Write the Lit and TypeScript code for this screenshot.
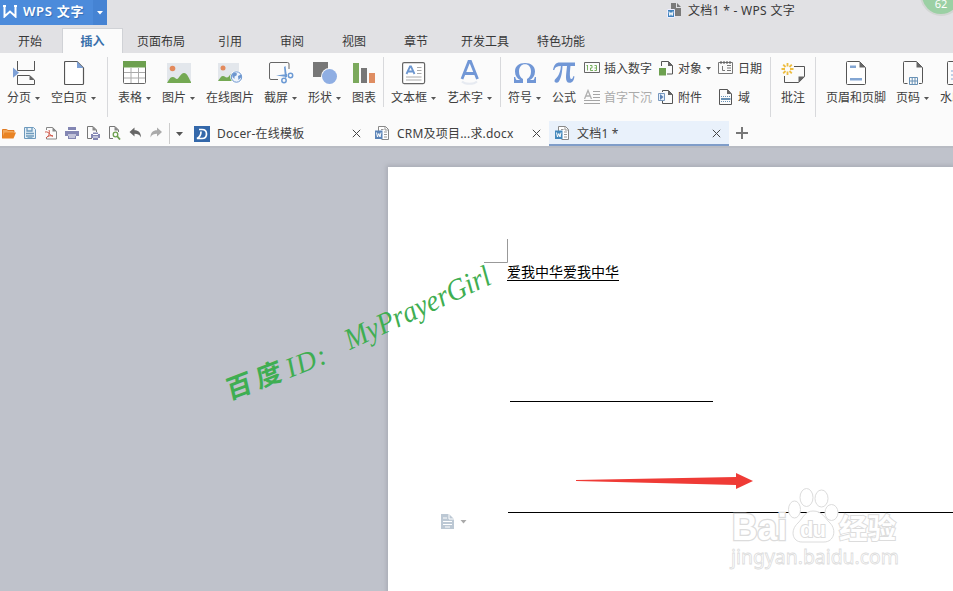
import { LitElement, html, svg, css, nothing, TemplateResult } from "lit";
import { customElement } from "lit/decorators.js";
import { classMap } from "lit/directives/class-map.js";
import { styleMap } from "lit/directives/style-map.js";

interface Tool {
  label: string;
  width: number;
  inset: number;
  icon: TemplateResult;
  caret?: boolean;
}

interface SmallTool {
  label: string;
  icon: TemplateResult;
  caret?: boolean;
  disabled?: boolean;
}

const caret = html`<svg class="caret" width="5" height="3" viewBox="0 0 5 3"><path d="M0 0h5L2.500 3z" fill="#555" /></svg>`;

const big = (body: unknown) => html`<svg class="big" width="26" height="26" viewBox="0 0 26 26" fill="none">${body}</svg>`;
const small = (body: unknown) => html`<svg class="small" width="16" height="16" viewBox="0 0 16 16" fill="none">${body}</svg>`;

const art = {
  pageBreak: big(svg`
    <path d="M4.500 1v9.500h17V1M9 15.500H4.500V24.500h17v-4.500L16.500 15.500H6" stroke="#555" />
    <path d="M16.500 15v5h5z" fill="#666" /><path d="M0 7.500l6 5.200-6 5z" fill="#7da0d6" />`),
  blank: big(svg`
    <path d="M.5 2.500a1 1 0 0 1 1-1h11.500l6.500 6.500v15.500a1 1 0 0 1-1 1h-17a1 1 0 0 1-1-1z" stroke="#555" stroke-width="1.200" fill="#fff" />
    <path d="M13 1.500V8h6.500z" fill="#7da0d6" />`),
  table: big(svg`
    <rect x=".5" y="1.500" width="22" height="22" rx="1" stroke="#666" fill="#fff" />
    <path d="M0 1h23v6.500H0z" fill="#6da04f" />
    <path d="M1 12.500h21M1 18h21M8 8v15M15.500 8v15" stroke="#aaa" />`),
  picture: big(svg`
    <path d="M0 3h24v20H0z" fill="#e3e7ec" /><circle cx="5.500" cy="8.500" r="2.800" fill="#e38a5c" />
    <path d="M0 23c2-3 3-6 5.500-6s3 2 4.500 2c2 0 3.500-6 7-6s5 6 7 9v1z" fill="#74a953" />`),
  online: big(svg`
    <path d="M0 3h21v18H0z" fill="#e3e7ec" /><circle cx="5" cy="8" r="2.500" fill="#e38a5c" />
    <path d="M0 21c2-3 3-5 5-5s2 1.500 4 1.500c2 0 3-4 5-4l2 7.500z" fill="#74a953" />
    <circle cx="18.500" cy="17" r="6.300" fill="#fff" /><circle cx="18.500" cy="17" r="5.200" fill="#eef4fc" stroke="#6c96cf" />
    <path d="M14 14l2.500-1.500 2.500 1-.5 2-2 1v2.500l-2-2zM20 16l3-1.500v3l-2.500 2.500z" fill="#6c96cf" />`),
  capture: big(svg`
    <path d="M9 19.500H2a1.500 1.500 0 0 1-1.500-1.500V4A1.500 1.500 0 0 1 2 2.500h16.500A1.500 1.500 0 0 1 20 4v5" stroke="#666" />
    <path d="M15 7l1.500-1 1.500 11-2 1zM7 15.500l11-1.500v3z" fill="#6c9ad4" />
    <circle cx="15" cy="20.500" r="2.200" stroke="#6c9ad4" stroke-width="1.500" /><circle cx="21.500" cy="15.500" r="2.200" stroke="#6c9ad4" stroke-width="1.500" />`),
  shapes: big(svg`
    <path d="M0 2h15v15H0z" fill="#777" /><circle cx="16.500" cy="16.500" r="8.500" fill="#fbfbfb" /><circle cx="16.500" cy="16.500" r="7.500" fill="#8faee3" />`),
  chart: big(svg`
    <path d="M0 3h6v20H0z" fill="#7ba95c" /><path d="M8 8h6v15H8z" fill="#777" /><path d="M16 13h6v10h-6z" fill="#df8d62" />`),
  textBox: big(svg`
    <rect x=".6" y="2.600" width="22" height="21" rx="1.500" stroke="#666" stroke-width="1.200" fill="#fff" />
    <path d="M4.500 14L8 6.500h1l3.500 7.500M6 11.500h5" stroke="#6c96cf" stroke-width="1.800" />
    <path d="M15 7.500h4.500M15 10.500h4.500M15 13.500h4.500M4 17h15.500M4 20h15.500" stroke="#aaa" />`),
  wordArt: big(svg`
    <path d="M2 19L8.900 1.500h1.600L17.500 19M4.500 13.500h10.500" stroke="#7197d6" stroke-width="2.800" />
    <path d="M2 21.500c3 3 12 3 15 0" stroke="#e6eaf1" stroke-width="2" />`),
  omega: big(svg`
    <path d="M0 23h9v-4C6.300 17.500 5 15 5 11.500 5 7 7.500 4.300 11 4.300s6 2.700 6 7.200c0 3.500-1.300 6-4 7.500v4h9v-6h-1.200c-.5 2.500-1 3-2.500 3h-2.500c3-1.500 5.200-4.300 5.200-8.500 0-5.500-4-8.500-10-8.500S1 6 1 11.500C1 15.700 3.200 18.500 6.200 20H3.700c-1.500 0-2-.5-2.500-3H0z" fill="#7197d6" />`),
  pi: big(svg`
    <path d="M0 10C1 5 2.500 2.500 7 2.500h15V6h-4.500c-.6 5-1.200 13 .8 13 1.200 0 1.700-1.200 1.900-2.700h1.200c-.3 4-1.800 6.500-4.800 6.500-5.500 0-3.200-9-2.600-16.800H9.500C9.300 12 8 19 5.500 22c-1 1-4 1-4-1 0-2 2-2.500 3.500-5C6.500 13.500 7.700 10 7.900 6 4 6 2 7 1.300 10z" fill="#7197d6" />`),
  comment: big(svg`
    <path d="M13 6.500h10.500v10l-6 6H3.500V16" stroke="#555" /><path d="M17.500 23v-6.500H24z" fill="#666" />
    <path d="M6.500 3v3.500M6.500 11.500V15M.5 9H4M9 9h3.500M2.200 4.700l2.300 2.300M8.500 11l2.300 2.300M2.200 13.300L4.500 11M8.500 7l2.300-2.300" stroke="#edbd42" stroke-width="1.800" />`),
  header: big(svg`
    <path d="M.5 2.500a1 1 0 0 1 1-1h12l6 6v16a1 1 0 0 1-1 1h-17a1 1 0 0 1-1-1z" stroke="#555" fill="#fff" />
    <path d="M13.500 1.500v6h6z" fill="#666" /><path d="M4 5.500h6V8H4zM4 18h12v2.500H4z" fill="#83a6d3" />`),
  pageNumber: big(svg`
    <path d="M4.500 23.500h-3a1 1 0 0 1-1-1v-20a1 1 0 0 1 1-1h12l6 6v15a1 1 0 0 1-1 1H16" stroke="#555" />
    <path d="M13.500 1.500v6h6z" fill="#666" /><path d="M6.500 17.500h8v7h-8zM9.200 17v8M12 17v8M6 21h9" stroke="#6891b5" />`),
  watermark: big(svg`
    <path d="M.5 2.500a1 1 0 0 1 1-1H20v23H1.500a1 1 0 0 1-1-1z" stroke="#555" /><path d="M4 11h9M4 15h9M4 19h9" stroke="#83a6d3" />`),
  digits: small(svg`
    <path d="M.5 2.500h15v10H.5z" stroke="#666" />
    <path d="M3.500 5v5.500M2.500 5.500h1M6 5.500h2V8H6.500v2.500H9M10.500 5.500h2v5h-2M10.500 8h2" stroke="#6aa84f" stroke-width=".9" />`),
  dropCap: small(svg`
    <path d="M.5 10L4 1.500 7.500 10M2 7h4" stroke="#b0b0b0" stroke-width="1.300" />
    <path d="M9 2.500h7M9 5.500h7M9 8.500h7M0 11.500h16M0 14.500h16" stroke="#a5a5a5" />`),
  object: small(svg`
    <path d="M3.500 6V1.500h7l4 4v8.500H9" stroke="#555" /><path d="M10 1v5h5z" fill="#666" /><path d="M1 8h7v7.500H1z" fill="#6da04f" />`),
  attachment: small(svg`
    <path d="M4.500 3V1.500h6l4 4v9h-10V12" stroke="#555" /><path d="M10 1v5h5z" fill="#666" />
    <path d="M.5 4.500h6v7h-6z" fill="#e8f0fa" stroke="#7596bd" /><path d="M2 5l3.500 3L2 11z" fill="#5b82b5" />`),
  date: small(svg`
    <path d="M.5 2.500h14v11H.5z" stroke="#777" /><path d="M3 1v3M6 1v3M9 1v3M12 1v3" stroke="#555" />
    <path d="M4.500 6v4.500H7M9 5.500h4M9 8h4M9 10.500h4" stroke="#777" />`),
  field: small(svg`
    <path d="M1.500.5h8l4 4.500v10.500h-12z" stroke="#555" /><path d="M9 0v5h4.500z" fill="#666" />
    <path d="M3 7.500h10M3 12.500h10" stroke="#6891b5" stroke-dasharray="1 1" /><path d="M3 10h9.500" stroke="#6891b5" stroke-width="2" />`),
};

interface Group {
  tools: Tool[];
  columns?: { width: number; items: SmallTool[] }[];
  tall?: boolean;
  gap: number;
}

const groups: Group[] = [
  {
    tall: true,
    gap: 10,
    tools: [
      { label: "分页", width: 44, inset: 6, icon: art.pageBreak, caret: true },
      { label: "空白页", width: 56, inset: 13, icon: art.blank, caret: true },
    ],
  },
  {
    gap: 7,
    tools: [
      { label: "表格", width: 44, inset: 5, icon: art.table, caret: true },
      { label: "图片", width: 44, inset: 5, icon: art.picture, caret: true },
      { label: "在线图片", width: 58, inset: 12, icon: art.online },
      { label: "截屏", width: 44, inset: 5, icon: art.capture, caret: true },
      { label: "形状", width: 44, inset: 5, icon: art.shapes, caret: true },
      { label: "图表", width: 31, inset: 1, icon: art.chart },
    ],
  },
  {
    gap: 7,
    tools: [
      { label: "文本框", width: 56, inset: 11, icon: art.textBox, caret: true },
      { label: "艺术字", width: 53, inset: 13, icon: art.wordArt, caret: true },
    ],
  },
  {
    tall: true,
    gap: 10,
    tools: [
      { label: "符号", width: 44, inset: 6, icon: art.omega, caret: true },
      { label: "公式", width: 32, inset: 1, icon: art.pi },
    ],
    columns: [
      { width: 74, items: [{ label: "插入数字", icon: art.digits }, { label: "首字下沉", icon: art.dropCap, disabled: true }] },
      { width: 60, items: [{ label: "对象", icon: art.object, caret: true }, { label: "附件", icon: art.attachment }] },
      { width: 52, items: [{ label: "日期", icon: art.date }, { label: "域", icon: art.field }] },
    ],
  },
  { tall: true, gap: 10, tools: [{ label: "批注", width: 34, inset: 0, icon: art.comment }] },
  {
    gap: 0,
    tools: [
      { label: "页眉和页脚", width: 70, inset: 20, icon: art.header },
      { label: "页码", width: 44, inset: 7, icon: art.pageNumber, caret: true },
      { label: "水印", width: 30, inset: 7, icon: art.watermark, caret: true },
    ],
  },
];

const q = (body: unknown) => html`<svg width="14" height="14" viewBox="0 0 14 14" fill="none">${body}</svg>`;
const quick = [
  q(svg`<path d="M.5 12V3.500h4L6 4.500h6v2" stroke="#e07b23" fill="#f3a85a" /><path d="M0 12.500L2.500 6.500H14L11.500 12.500z" fill="#e98425" />`),
  q(svg`<path d="M1.500 1.500h9l2 2v9h-11z" stroke="#6e9abd" fill="#e6f0f7" /><path d="M4 1v4h5V1M3 7.500h8M3 10h8M4.500 12h5" stroke="#6e9abd" stroke-width="1.300" />`),
  q(svg`<path d="M2.500 4V1.500h6l4 4v7.500h-10v-2" stroke="#888" /><path d="M8.500 1v4.500H13z" fill="#888" /><path d="M1 6c5-1 5 5 8 4-2-1-6 0-7 2M5 4c1 3 0 6-3 8" stroke="#d05545" />`),
  q(svg`<path d="M3 1h8v3H3zM0 5h14v5H0zM3 8.500h8V13H3z" fill="#8386b3" /><path d="M3 4.500h8M3 9h8M4 11h6" stroke="#fff" />`),
  q(svg`<path d="M6 12.500H1.500V.5H7L10.500 4v2" stroke="#777" /><path d="M6.500 0v4.500H11z" fill="#888" /><path d="M5 8h9v4H5zM7 6.500h5V14H7z" fill="#8386b3" /><path d="M7 8.500h5M7 11h5" stroke="#fff" />`),
  q(svg`<path d="M6 12.500H2.500V.5H8L11.500 4v2" stroke="#777" /><path d="M7.500 0v4.500H12z" fill="#888" /><circle cx="8.500" cy="8.500" r="2.300" stroke="#6da04f" stroke-width="1.300" /><path d="M10 10l3 3.500" stroke="#6da04f" stroke-width="1.800" />`),
  q(svg`<path d="M1.500 6l5-4.500v2.800c4 0 6.500 2 6.500 7.200C11.500 8.500 9.500 7.800 6.500 7.800v2.700z" fill="#666" />`),
  q(svg`<path d="M13 6L8 1.500v2.800c-4 0-6.500 2-6.500 7.200C3 8.500 5 7.800 8 7.800v2.700z" fill="#aaa" />`),
];

const docIcon = (tint: string) => html`<svg class="doc-icon" width="15" height="15" viewBox="0 0 15 15" fill="none">
  <path d="M3.500 5V.5h7l3 3v10h-7" stroke="#888" fill="#fff" /><path d="M10 .5v3.500h3.500M6 3.500h2.500M9 6h3M9 8.500h3M9 11h3" stroke="#999" />
  <path d="M0 4.500h7.500v8.500H0z" fill=${tint} /><path d="M1.500 6.500l1 4.500 1.300-3.500L5 11l1-4.500" stroke="#fff" />
</svg>`;

const close = html`<svg class="close" width="9" height="9" viewBox="0 0 9 9"><path d="M.8.8l7.400 7.400M8.200.8L.8 8.200" stroke="#444" /></svg>`;

@customElement("title-bar")
export class TitleBar extends LitElement {
  static styles = css`
    :host { display: flex; position: relative; height: 28px; background: #e1e1e4; justify-content: space-between; align-items: flex-start; overflow: hidden; }
    .brand { display: flex; align-items: center; width: 107px; height: 25px; background: #4c8bdb; color: #fff; font-size: 13px; font-weight: 600; letter-spacing: 0.7px; }
    .logo { margin: -2px 6px 0 3px; flex: none; }
    .name { width: 70px; margin-top: -4px; white-space: nowrap; text-shadow: 1px 1px 1px #346eb7; }
    .drop { display: flex; flex: 1; height: 25px; align-items: center; justify-content: center; background: #4583d3; }
    .title { display: flex; gap: 6px; align-items: center; width: 286px; height: 20px; font-size: 12px; letter-spacing: 0.3px; color: #383838; white-space: nowrap; }
    .badge { position: absolute; left: 920px; top: -26px; width: 38px; height: 38px; border: 2px solid #d2d6d3; border-radius: 50%; background: #9bd0a4; color: #fff; font-size: 11px; line-height: 56px; text-align: center; }
  `;

  render() {
    return html`
      <div class="brand">
        <svg class="logo" width="14" height="13" viewBox="0 0 14 13"><path d="M0 1H3M1.500 1v10.500L7 6.500l5.500 5V1M11 1H14" fill="none" stroke="#fff" stroke-width="2" /></svg>
        <span class="name">WPS 文字</span>
        <span class="drop"><svg width="6" height="4" viewBox="0 0 6 4"><path d="M0 0h6L3 3.500z" fill="#fff" /></svg></span>
      </div>
      <div class="title">
        <svg width="15" height="15" viewBox="0 0 15 15"><path d="M4 0h5v5h5v8H4z" fill="#7a7a7a" /><path d="M10 0l4 4h-4z" fill="#7a7a7a" />
          <path d="M.5 6.500h7v8h-7z" fill="#3f82bd" stroke="#eef" /><path d="M2 8.500l.8 4L4 9.500l1.200 3 .8-4" fill="none" stroke="#fff" /></svg>
        <span>文档1 * - WPS 文字</span>
      </div>
      <div class="badge">62</div>
    `;
  }
}

@customElement("menu-bar")
export class MenuBar extends LitElement {
  static styles = css`
    :host { display: flex; height: 25px; background: #e1e1e4; font-size: 12px; color: #383838; }
    .tab { display: flex; box-sizing: border-box; align-items: center; justify-content: center; padding-top: 1px; white-space: nowrap; }
    .tab:first-child { padding-right: 2px; }
    .active { background: #fbfbfb; color: #3970ab; font-weight: 700; border: 1px solid #d0d2d6; border-bottom: 0; padding-top: 0; }
  `;

  private tabs: [string, number][] = [["开始", 62], ["插入", 61], ["页面布局", 76], ["引用", 62], ["审阅", 62], ["视图", 62], ["章节", 62], ["开发工具", 76], ["特色功能", 76]];

  render() {
    return this.tabs.map(([label, width]) => html`
      <div class=${classMap({ tab: true, active: label === "插入" })} style=${styleMap({ width: `${width}px` })}>${label}</div>`);
  }
}

@customElement("ribbon-bar")
export class RibbonBar extends LitElement {
  static styles = css`
    :host { display: flex; height: 67px; background: #fbfbfb; font-size: 12px; color: #404040; padding-left: 7px; overflow: hidden; }
    .group { display: flex; flex: none; padding-top: 7px; }
    .rule { width: 1px; height: 50px; margin-top: -3px; background: #d8d9dc; }
    .tall .rule { height: 60px; }
    .tool { display: flex; flex-direction: column; flex: none; white-space: nowrap; }
    .label { display: flex; align-items: center; height: 16px; margin-top: 4px; gap: 4px; line-height: 16px; }
    .big, .small, .caret { display: block; flex: none; }
    .column { display: flex; flex-direction: column; gap: 13px; }
    .row { display: flex; align-items: center; height: 16px; gap: 4px; white-space: nowrap; }
    .disabled { color: #aaa; }
  `;

  render() {
    return groups.map((group, i) => html`
      <div class=${classMap({ group: true, tall: !!group.tall })} style=${styleMap({ marginRight: `${group.gap}px` })}>
        ${group.tools.map((tool) => html`
          <div class="tool" style=${styleMap({ width: `${tool.width}px` })}>
            <div style=${styleMap({ paddingLeft: `${tool.inset}px` })}>${tool.icon}</div>
            <div class="label">${tool.label}${tool.caret ? caret : nothing}</div>
          </div>`)}
        ${group.columns?.map((column) => html`
          <div class="column" style=${styleMap({ width: `${column.width}px` })}>
            ${column.items.map((item) => html`
              <div class=${classMap({ row: true, disabled: !!item.disabled })}>${item.icon}${item.label}${item.caret ? caret : nothing}</div>`)}
          </div>`)}
        ${i === groups.length - 1 ? nothing : html`<div class="rule"></div>`}
      </div>`);
  }
}

@customElement("document-tabs")
export class DocumentTabs extends LitElement {
  static styles = css`
    :host { display: flex; height: 26px; align-items: stretch; background: #fbfbfb; font-size: 12px; color: #404040; box-sizing: border-box; }
    .quick { display: flex; align-items: center; gap: 7px; padding-left: 2px; width: 167px; }
    .quick svg { display: block; flex: none; }
    .more { display: flex; align-items: center; border-left: 1px solid #ccc; width: 18px; padding-left: 6px; margin: 3px 0 2px; box-sizing: content-box; }
    .tab { display: flex; align-items: center; box-sizing: border-box; width: 180px; height: 25px; padding: 0 8px 0 6px; margin-top: 1px; white-space: nowrap; }
    .first { width: 175px; padding-left: 0; }
    .text { flex: 1; margin: -2px 0 0 7px; letter-spacing: 0.2px; }
    .active { background: #e9f1fb; border-bottom: 2px solid #7f9dc9; padding-top: 1px; }
    .active .text { margin-top: -1px; }
    .plus { margin: 7px 0 0 7px; }
  `;

  render() {
    return html`
      <div class="quick">${quick}</div>
      <div class="more"><svg width="7" height="4" viewBox="0 0 7 4"><path d="M0 0h7L3.500 4z" fill="#555" /></svg></div>
      <div class="tab first">
        <svg width="16" height="16" viewBox="0 0 16 16" fill="none"><path d="M0 0h16v16H0z" fill="#3468aa" />
          <path d="M5 3.500h3c3 0 4.500 2 4.500 4.500S11 12.500 8 12.500H3c3-1.500 4-3.500 4-7" stroke="#fff" stroke-width="1.700" /></svg>
        <span class="text">Docer-在线模板</span>${close}
      </div>
      <div class="tab">${docIcon("#5b84b8")}<span class="text">CRM及项目...求.docx</span>${close}</div>
      <div class="tab active">${docIcon("#4489bd")}<span class="text">文档1 *</span>${close}</div>
      <svg class="plus" width="12" height="12" viewBox="0 0 12 12"><path d="M6 0v12M0 6h12" stroke="#777" stroke-width="2" /></svg>
    `;
  }
}

@customElement("document-canvas")
export class DocumentCanvas extends LitElement {
  static styles = css`
    :host { display: block; position: relative; flex: 1; box-sizing: border-box; border-top: 2px solid #b8bbc3; padding: 19px 0 0 388px; background: #bfc2cb; overflow: hidden; }
    .page { display: flex; align-items: flex-start; height: 430px; background: #fff; box-shadow: 0 0 4px 2px #abaeb7; box-sizing: border-box; padding: 96px 0 0 119px; }
    .line { height: 17px; border-bottom: 1px solid #000; font-size: 14px; line-height: 18px; color: #000; white-space: nowrap; }
    .overlay { position: absolute; left: 0; top: -2px; }
    .script { font-family: "Liberation Serif", "Noto Sans CJK SC", serif; font-style: italic; }
    .han { font-family: "Noto Sans CJK SC", sans-serif; font-weight: 700; }
    .mark { font-family: "Liberation Sans", "Noto Sans CJK SC", sans-serif; font-weight: 700; paint-order: stroke; }
    .site { font-family: "Noto Sans", sans-serif; }
  `;

  render() {
    return html`
      <div class="page"><span class="line">爱我中华爱我中华</span></div>
      <svg class="overlay" width="953" height="445" viewBox="0 146 953 445" fill="none">
        <path d="M507.500 239v23.500H484" stroke="#999" />
        <path d="M510 401.500h203M508 512.500h445" stroke="#000" />
        <path d="M576 480l160-3v-4l17 8-17 8v-4l-160-4z" fill="#ef3b36" />
        <g fill="#3fae52">
          <text class="han" font-size="26" textLength="58" transform="translate(229 400) rotate(-21) skewX(-8)">百度</text>
          <text class="script" font-size="28" textLength="42" transform="translate(290 378) rotate(-22)">ID:</text>
          <text class="script" font-size="30" textLength="158" lengthAdjust="spacingAndGlyphs" transform="translate(350 350) rotate(-25)">MyPrayerGirl</text>
        </g>
        <path d="M441 514h8l5 5v10h-13z" fill="#bcc8d4" />
        <path d="M449 514v5h5M443 518h4M443 521.500h9M443 524.500h9M445 527h5" stroke="#fff" />
        <path d="M460.500 520h6l-3 3.500z" fill="#aaa" />
        <g fill="#fff" stroke="#dcdcdc">
          <ellipse cx="794.500" cy="509.500" rx="6" ry="8.500" /><ellipse cx="806.500" cy="497.500" rx="6.500" ry="9" />
          <ellipse cx="821.500" cy="498.500" rx="6.500" ry="8.500" /><ellipse cx="831.500" cy="512.500" rx="6.500" ry="8" />
          <text class="mark" font-size="36" x="732" y="540" textLength="55" lengthAdjust="spacingAndGlyphs" stroke-width="2.600">Bai</text>
          <path d="M813 511c-8 0-10 7-15 12-8 7-6 19 4 19h22c10 0 13-12 6-19-5-5-8-12-17-12z" />
          <text class="mark" font-size="22" x="800" y="537" textLength="26" stroke-width="2">du</text>
          <text class="mark" font-size="28.500" x="839" y="539" textLength="57" stroke-width="2">经验</text>
          <text class="site" font-size="20" x="731" y="564" textLength="168" lengthAdjust="spacingAndGlyphs" stroke-width=".8">jingyan.baidu.com</text>
        </g>
      </svg>
    `;
  }
}

@customElement("app-root")
export class AppRoot extends LitElement {
  static styles = css`
    :host { display: flex; flex-direction: column; width: 953px; height: 591px; overflow: hidden; font-family: "Noto Sans", "Noto Sans CJK SC", sans-serif; }
  `;

  render() {
    return html`
      <title-bar></title-bar>
      <menu-bar></menu-bar>
      <ribbon-bar></ribbon-bar>
      <document-tabs></document-tabs>
      <document-canvas></document-canvas>
    `;
  }
}
